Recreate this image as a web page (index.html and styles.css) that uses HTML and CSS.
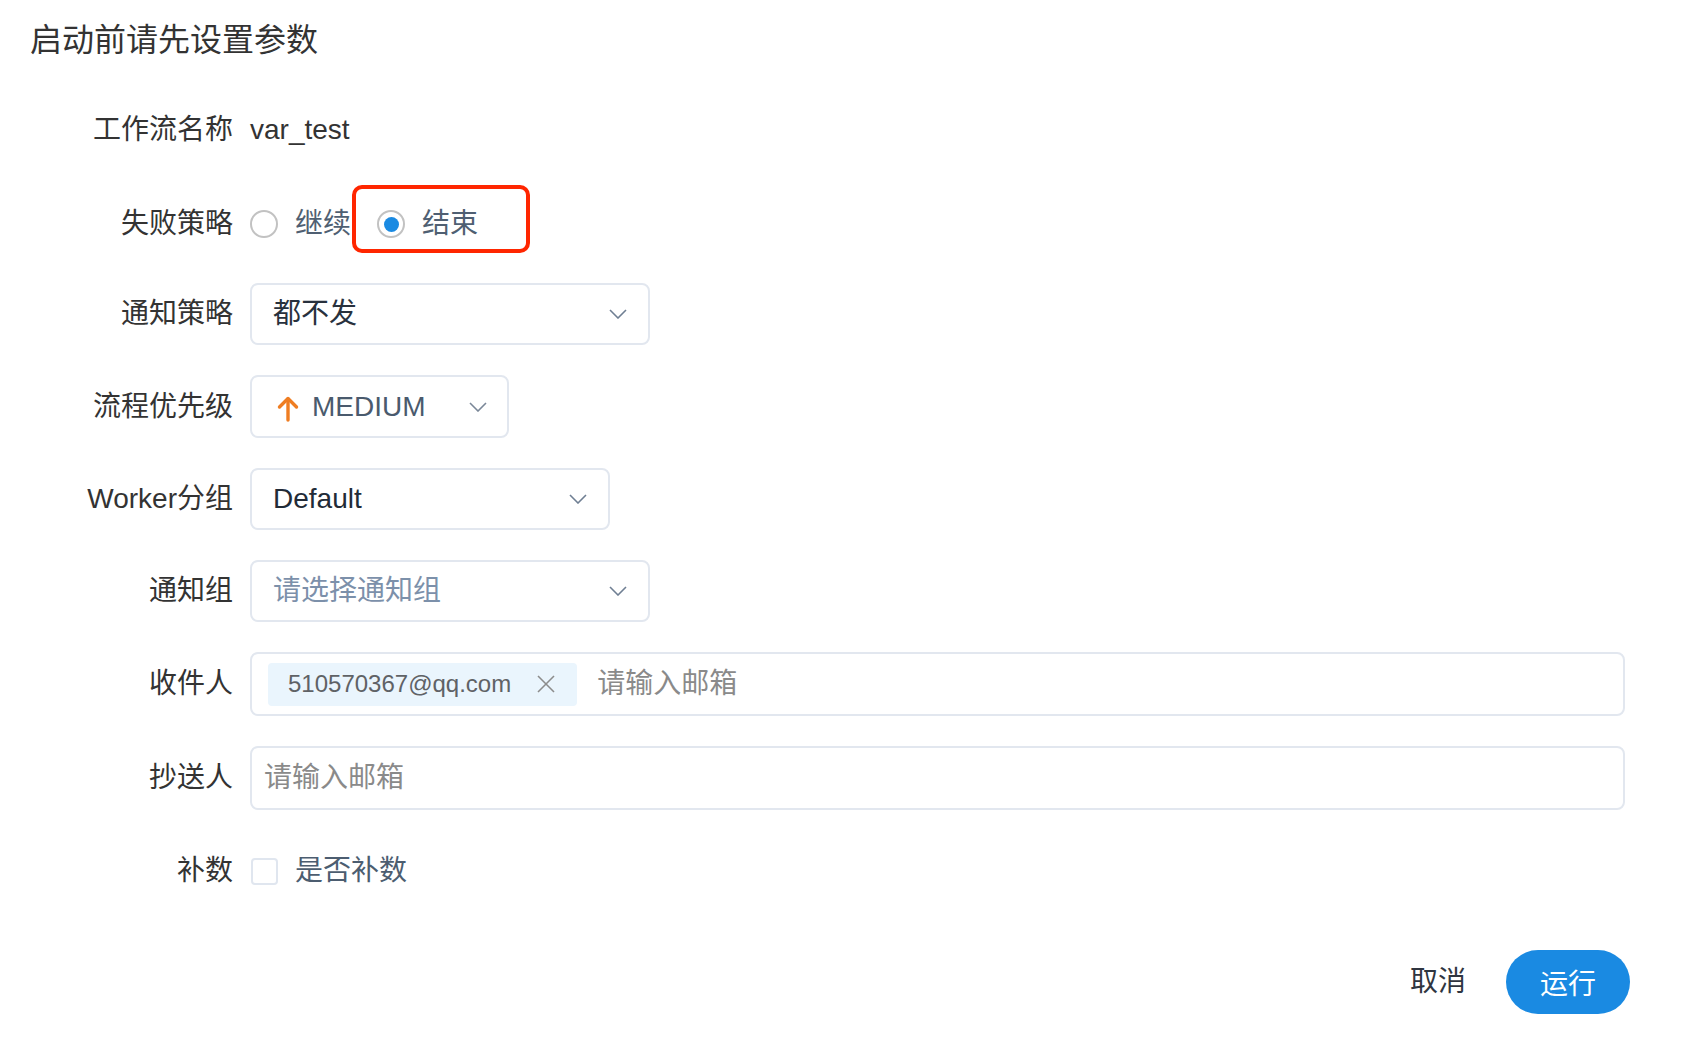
FILE: index.html
```html
<!DOCTYPE html>
<html lang="zh-CN">
<head>
<meta charset="utf-8">
<title>启动前请先设置参数</title>
<link rel="stylesheet" href="styles.css">
</head>
<body>
<div class="dialog">
  <h1 class="title">启动前请先设置参数</h1>
  <div class="form">
    <div class="row">
      <div class="label">工作流名称</div>
      <div class="value">var_test</div>
    </div>
    <div class="row row-radio">
      <div class="label">失败策略</div>
      <div class="radios">
        <div class="radio-opt">
          <span class="radio"></span>
          <span class="radio-text">继续</span>
        </div>
        <div class="radio-opt radio-opt-marked">
          <span class="radio radio-checked"><span class="radio-dot"></span></span>
          <span class="radio-text">结束</span>
          <span class="mark"></span>
        </div>
      </div>
    </div>
    <div class="row">
      <div class="label">通知策略</div>
      <div class="select select-400">
        <span class="select-text">都不发</span>
        <svg class="chev" width="18" height="10" viewBox="0 0 18 10"><polyline points="1,1 9,9 17,1" fill="none" stroke="#6f7f93" stroke-width="1.6"/></svg>
      </div>
    </div>
    <div class="row">
      <div class="label">流程优先级</div>
      <div class="select select-prio">
        <span class="prio">
          <svg class="prio-arrow" width="22" height="26" viewBox="0 0 22 26"><line x1="11" y1="24" x2="11" y2="3" stroke="#ef7d22" stroke-width="3.4" stroke-linecap="round"/><polyline points="2.5,11 11,2.5 19.5,11" fill="none" stroke="#ef7d22" stroke-width="3.4" stroke-linecap="round" stroke-linejoin="round"/></svg>
          <span class="prio-text">MEDIUM</span>
        </span>
        <svg class="chev" width="18" height="10" viewBox="0 0 18 10"><polyline points="1,1 9,9 17,1" fill="none" stroke="#7a8798" stroke-width="1.6"/></svg>
      </div>
    </div>
    <div class="row">
      <div class="label">Worker分组</div>
      <div class="select select-360">
        <span class="select-text select-strong">Default</span>
        <svg class="chev" width="18" height="10" viewBox="0 0 18 10"><polyline points="1,1 9,9 17,1" fill="none" stroke="#6f7f93" stroke-width="1.6"/></svg>
      </div>
    </div>
    <div class="row">
      <div class="label">通知组</div>
      <div class="select select-400">
        <span class="select-placeholder">请选择通知组</span>
        <svg class="chev" width="18" height="10" viewBox="0 0 18 10"><polyline points="1,1 9,9 17,1" fill="none" stroke="#6f7f93" stroke-width="1.6"/></svg>
      </div>
    </div>
    <div class="row">
      <div class="label">收件人</div>
      <div class="input input-tags">
        <span class="tag">
          <span class="tag-text">510570367@qq.com</span>
          <svg class="tag-close" width="20" height="20" viewBox="0 0 20 20"><line x1="2" y1="2" x2="18" y2="18" stroke="#8c8c8c" stroke-width="1.6"/><line x1="18" y1="2" x2="2" y2="18" stroke="#8c8c8c" stroke-width="1.6"/></svg>
        </span>
        <span class="input-placeholder tags-placeholder">请输入邮箱</span>
      </div>
    </div>
    <div class="row">
      <div class="label">抄送人</div>
      <div class="input">
        <span class="input-placeholder">请输入邮箱</span>
      </div>
    </div>
    <div class="row">
      <div class="label">补数</div>
      <div class="check-opt">
        <span class="checkbox"></span>
        <span class="check-text">是否补数</span>
      </div>
    </div>
  </div>
  <div class="footer">
    <span class="btn-text">取消</span>
    <span class="btn-primary">运行</span>
  </div>
</div>
</body>
</html>
```
FILE: styles.css
```css
html, body {
  margin: 0;
  padding: 0;
  background: #ffffff;
}

body {
  font-family: "Liberation Sans", "Noto Sans CJK SC", sans-serif;
  color: #333333;
}

.dialog {
  width: 1682px;
  height: 1040px;
  box-sizing: border-box;
  padding: 18px 57px 0 0;
}

.title {
  margin: 0 0 37px 30px;
  font-size: 32px;
  line-height: 44px;
  font-weight: normal;
  color: #333333;
}

.form {
  display: flex;
  flex-direction: column;
  gap: 30px;
}

.row {
  display: grid;
  grid-template-columns: 250px 1fr;
  align-items: center;
  min-height: 62px;
}

.row-radio {
  margin-top: 2px;
  margin-bottom: -2px;
}

.label {
  text-align: right;
  padding-right: 17px;
  font-size: 28px;
  line-height: 40px;
  color: #333333;
  white-space: nowrap;
}

.value {
  font-size: 28px;
  line-height: 40px;
  color: #333333;
}

/* radios */
.radios {
  display: flex;
  align-items: center;
}

.radio-opt {
  display: flex;
  align-items: center;
  position: relative;
}

.radio-opt + .radio-opt {
  margin-left: 26px;
}

.radio {
  width: 28px;
  height: 28px;
  box-sizing: border-box;
  border: 2px solid #c2c2c2;
  border-radius: 50%;
  display: flex;
  align-items: center;
  justify-content: center;
  background: #ffffff;
}

.radio-dot {
  width: 15px;
  height: 15px;
  border-radius: 50%;
  background: #1a8ae2;
}

.radio-text {
  margin-left: 17px;
  font-size: 28px;
  line-height: 40px;
  color: #4f5f72;
}

.mark {
  position: absolute;
  left: -25px;
  top: -19px;
  width: 178px;
  height: 68px;
  box-sizing: border-box;
  border: 4.5px solid #ff2600;
  border-radius: 10px;
  pointer-events: none;
}

/* selects */
.select {
  height: 62px;
  box-sizing: border-box;
  border: 2px solid #e2e7ef;
  border-radius: 8px;
  display: flex;
  align-items: center;
  justify-content: space-between;
  padding: 0 21px 0 21px;
  background: #ffffff;
}

.select-400 {
  width: 400px;
}

.select-360 {
  width: 360px;
}

.select-prio {
  width: 259px;
  height: 63px;
  padding: 0 20px 0 25px;
}

.select-text {
  font-size: 28px;
  line-height: 40px;
  color: #28313d;
}

.select-strong {
  color: #222b37;
}

.select-placeholder {
  font-size: 28px;
  line-height: 40px;
  color: #7c90aa;
}

.chev {
  display: block;
  flex: none;
}

.prio {
  display: flex;
  align-items: center;
}

.prio-arrow {
  display: block;
  margin-top: 4px;
}

.prio-text {
  margin-left: 13px;
  font-size: 28px;
  line-height: 40px;
  color: #4a5a6d;
}

/* inputs */
.input {
  height: 64px;
  box-sizing: border-box;
  border: 2px solid #e2e7ef;
  border-radius: 8px;
  display: flex;
  align-items: center;
  padding: 0 12px;
  background: #ffffff;
}

.input-tags {
  padding-left: 16px;
}

.input-placeholder {
  font-size: 28px;
  line-height: 40px;
  color: #8a8a8a;
}

.tags-placeholder {
  margin-left: 20px;
}

.tag {
  height: 43px;
  display: flex;
  align-items: center;
  background: #eaf5fd;
  border-radius: 4px;
  padding: 0 21px 0 20px;
}

.tag-text {
  font-size: 24px;
  line-height: 30px;
  color: #5f6266;
}

.tag-close {
  display: block;
  margin-left: 25px;
}

/* checkbox */
.check-opt {
  display: flex;
  align-items: center;
}

.checkbox {
  width: 27px;
  height: 27px;
  box-sizing: border-box;
  border: 2px solid #e0e6ef;
  border-radius: 4px;
  margin-left: 1px;
}

.check-text {
  margin-left: 17px;
  font-size: 28px;
  line-height: 40px;
  color: #4c5d70;
}

/* footer */
.footer {
  margin-top: 48px;
  margin-right: -5px;
  display: flex;
  justify-content: flex-end;
  align-items: center;
}

.btn-text {
  font-size: 28px;
  line-height: 40px;
  color: #2f3540;
  margin-right: 40px;
}

.btn-primary {
  width: 124px;
  height: 64px;
  border-radius: 32px;
  background: #1a8ae2;
  color: #ffffff;
  font-size: 28px;
  display: flex;
  align-items: center;
  justify-content: center;
}
```
